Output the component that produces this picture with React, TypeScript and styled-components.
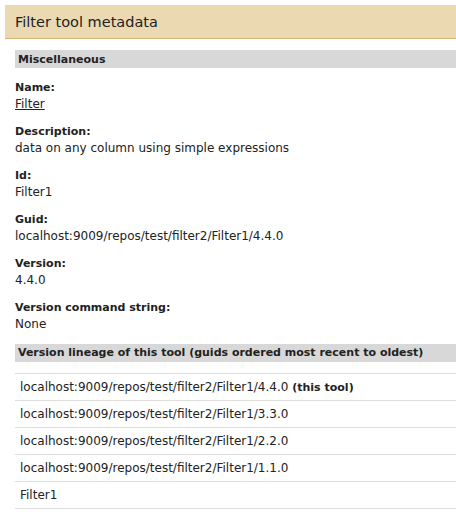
import React from "react";
import styled, { createGlobalStyle } from "styled-components";

const GlobalStyle = createGlobalStyle`
  html, body {
    margin: 0;
    padding: 0;
    background: #ffffff;
  }
  body {
    font-family: "DejaVu Sans", "Liberation Sans", sans-serif;
    font-size: 12px;
    color: #222222;
  }
`;

const Page = styled.div`
  padding: 5px 0 0 5px;
`;

const TitleBar = styled.div`
  height: 33px;
  display: flex;
  align-items: center;
  padding-left: 10px;
  background: #ebd9b2;
  border-bottom: 1px solid #d6b676;
  font-size: 14.5px;
  color: #222222;
`;

const Body = styled.div`
  padding: 11px 0 0 10px;
`;

const SectionBar = styled.div`
  height: 18px;
  display: flex;
  align-items: center;
  padding-left: 3px;
  background: #d8d8d8;
  font-weight: bold;
  font-size: 11px;
`;

const Field = styled.div`
  padding: 12px 0 0 0;
  line-height: 16px;
`;

const Label = styled.div`
  font-weight: bold;
  font-size: 11px;
`;

const Link = styled.a`
  color: #222222;
  text-decoration: underline;
`;

const Strong = styled.b`
  font-size: 11px;
`;

const Lineage = styled.div`
  margin-top: 11px;
  border-bottom: 1px solid #dddddd;
`;

const LineageRow = styled.div`
  height: 26px;
  display: flex;
  align-items: center;
  padding-left: 5px;
  border-top: 1px solid #dddddd;
`;

const fields = [
  { label: "Description:", value: "data on any column using simple expressions" },
  { label: "Id:", value: "Filter1" },
  { label: "Guid:", value: "localhost:9009/repos/test/filter2/Filter1/4.4.0" },
  { label: "Version:", value: "4.4.0" },
  { label: "Version command string:", value: "None" },
];

const lineage = [
  "localhost:9009/repos/test/filter2/Filter1/3.3.0",
  "localhost:9009/repos/test/filter2/Filter1/2.2.0",
  "localhost:9009/repos/test/filter2/Filter1/1.1.0",
  "Filter1",
];

export default function App() {
  return (
    <>
      <GlobalStyle />
      <Page>
        <TitleBar>Filter tool metadata</TitleBar>
        <Body>
          <SectionBar>Miscellaneous</SectionBar>
          <Field>
            <Label>Name:</Label>
            <div>
              <Link href="#">Filter</Link>
            </div>
          </Field>
          {fields.map((f) => (
            <Field key={f.label}>
              <Label>{f.label}</Label>
              <div>{f.value}</div>
            </Field>
          ))}
          <Field>
            <SectionBar>Version lineage of this tool (guids ordered most recent to oldest)</SectionBar>
          </Field>
          <Lineage>
            <LineageRow>
              <span>
                localhost:9009/repos/test/filter2/Filter1/4.4.0 <Strong>(this tool)</Strong>
              </span>
            </LineageRow>
            {lineage.map((g) => (
              <LineageRow key={g}>{g}</LineageRow>
            ))}
          </Lineage>
        </Body>
      </Page>
    </>
  );
}
